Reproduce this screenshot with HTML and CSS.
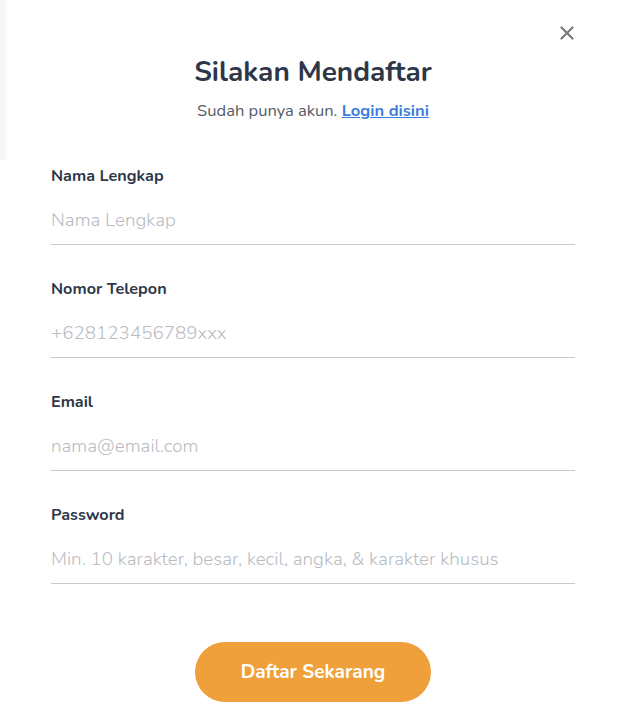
FILE: index.html
```html
<!DOCTYPE html>
<html lang="id">
<head>
<meta charset="utf-8">
<title>Silakan Mendaftar</title>
<link rel="stylesheet" href="styles.css">
</head>
<body>
<div class="side-shadow"></div>
<div class="modal">
  <button class="close" aria-label="Tutup">
    <svg width="14" height="14" viewBox="0 0 14 14"><path d="M1.5 1.5 L12.5 12.5 M12.5 1.5 L1.5 12.5" stroke="#7a7a7a" stroke-width="2.2" stroke-linecap="round"/></svg>
  </button>
  <h1 class="title">Silakan Mendaftar</h1>
  <p class="subtitle">Sudah punya akun. <a href="#" class="link">Login disini</a></p>
  <form class="form">
    <div class="field">
      <label class="label">Nama Lengkap</label>
      <input class="input" type="text" placeholder="Nama Lengkap">
    </div>
    <div class="field">
      <label class="label">Nomor Telepon</label>
      <input class="input" type="text" placeholder="+628123456789xxx">
    </div>
    <div class="field">
      <label class="label">Email</label>
      <input class="input" type="text" placeholder="nama@email.com">
    </div>
    <div class="field">
      <label class="label">Password</label>
      <input class="input" type="password" placeholder="Min. 10 karakter, besar, kecil, angka, &amp; karakter khusus">
    </div>
    <div class="actions">
      <button type="button" class="submit">Daftar Sekarang</button>
    </div>
  </form>
</div>
</body>
</html>
```
FILE: styles.css
```css
* { box-sizing: border-box; }
html, body { margin: 0; padding: 0; background: #fff; }
body { font-family: "Nunito", Lato, "Noto Sans", sans-serif; color: #2d3748; }
.side-shadow {
  position: absolute; left: 0; top: 0; width: 7px; height: 160px;
  background: linear-gradient(to right, #f3f4f6, #fafafa);
}
.modal { position: relative; padding: 56px 52px 0 51px; }
.close {
  position: absolute; top: 26px; right: 53px;
  width: 14px; height: 14px; padding: 0; border: 0; background: none; cursor: pointer;
}
.close svg { display: block; }
.title {
  margin: 0; text-align: center; font-size: 28px; line-height: 32px; font-weight: 700; color: #2d3748;
}
.subtitle {
  margin: 13px 0 0; text-align: center; font-size: 16.5px; line-height: 20px; color: #555b66;
}
.link { color: #3b7ddd; font-weight: 700; text-decoration: underline; }
.form { display: flex; flex-direction: column; margin-top: 45px; }
.field { display: flex; flex-direction: column; gap: 11px; margin-bottom: 34px; }
.label { font-size: 16.2px; line-height: 20px; font-weight: 700; color: #2d3748; }
.input {
  height: 48px; border: 0; border-bottom: 1px solid #c8c9cc; padding: 0 0 2px; outline: none;
  font-family: inherit; font-size: 18.8px; font-weight: 300; color: #2d3748; background: transparent;
}
.input::placeholder { color: #b9bcc3; }
.actions { display: flex; justify-content: center; margin-top: 24px; }
.submit {
  width: 236px; height: 60px; border: 0; border-radius: 30px; background: #f0a03b;
  color: #fff; font-family: inherit; font-size: 19px; font-weight: 700; cursor: pointer;
}
```
